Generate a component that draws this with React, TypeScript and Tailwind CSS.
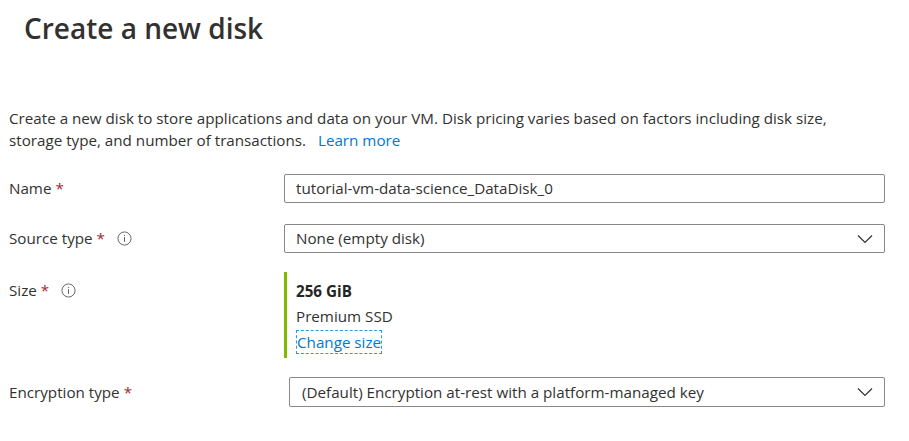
import React from "react";

const Star = () => <span className="ml-1 text-[#a4262c]">*</span>;

const Info = () => (
  <svg width="15" height="15" viewBox="0 0 16 16" className="ml-3 text-[#605e5c]">
    <circle cx="8" cy="8" r="7" fill="none" stroke="currentColor" strokeWidth="1" />
    <line x1="8" y1="6.5" x2="8" y2="11.5" stroke="currentColor" strokeWidth="1.1" />
    <circle cx="8" cy="4.6" r="0.7" fill="currentColor" />
  </svg>
);

const Chevron = () => (
  <svg width="16" height="10" viewBox="0 0 16 10" className="text-[#323130]">
    <path d="M1 1.5 L8 8.5 L15 1.5" fill="none" stroke="currentColor" strokeWidth="1.2" />
  </svg>
);

const App = () => {
  return (
    <div
      className="h-[441px] w-[909px] overflow-hidden bg-white text-[#323130]"
      style={{ fontFamily: "'Open Sans', 'Noto Sans', sans-serif" }}
    >
      <h1 className="pl-6 pt-[8px] text-[28px] font-semibold leading-[40px]">
        Create a new disk
      </h1>

      <p className="mt-[59px] pl-[9px] text-[15.2px] leading-[22px]">
        Create a new disk to store applications and data on your VM. Disk pricing varies based on factors including disk size,
        <br />
        storage type, and number of transactions.
        <span className="ml-3 text-[#0078d4]">Learn more</span>
      </p>

      <div className="mt-[23px] pl-[9px] pr-6 text-[15.2px]">
        <div className="flex items-center">
          <div className="flex w-[275px] items-center">
            Name
            <Star />
          </div>
          <div className="flex h-[29px] flex-1 items-center rounded-[2px] border border-[#8a8886] px-[11px]">
            tutorial-vm-data-science_DataDisk_0
          </div>
        </div>

        <div className="mt-[21px] flex items-center">
          <div className="flex w-[275px] items-center">
            Source type
            <Star />
            <Info />
          </div>
          <div className="flex h-[29px] flex-1 items-center justify-between rounded-[2px] border border-[#8a8886] pl-[11px] pr-[11px]">
            <span>None (empty disk)</span>
            <Chevron />
          </div>
        </div>

        <div className="mt-[19px] flex items-start">
          <div className="flex w-[275px] items-center pt-[7px]">
            Size
            <Star />
            <Info />
          </div>
          <div className="border-l-[3px] border-[#7fba00] pl-[9px] pt-[7px] pb-[4px]">
            <div className="font-bold leading-[24px] text-[#252423]">256 GiB</div>
            <div className="leading-[26px]">Premium SSD</div>
            <div className="mt-[1px] inline-block border border-dashed border-[#2b9be0] leading-[22px] text-[#0078d4]">
              Change size
            </div>
          </div>
        </div>

        <div className="mt-[19px] flex items-center">
          <div className="flex w-[280px] items-center">
            Encryption type
            <Star />
          </div>
          <div className="flex h-[30px] flex-1 items-center justify-between rounded-[2px] border border-[#8a8886] pl-[12px] pr-[11px]">
            <span>(Default) Encryption at-rest with a platform-managed key</span>
            <Chevron />
          </div>
        </div>
      </div>
    </div>
  );
};

export default App;
